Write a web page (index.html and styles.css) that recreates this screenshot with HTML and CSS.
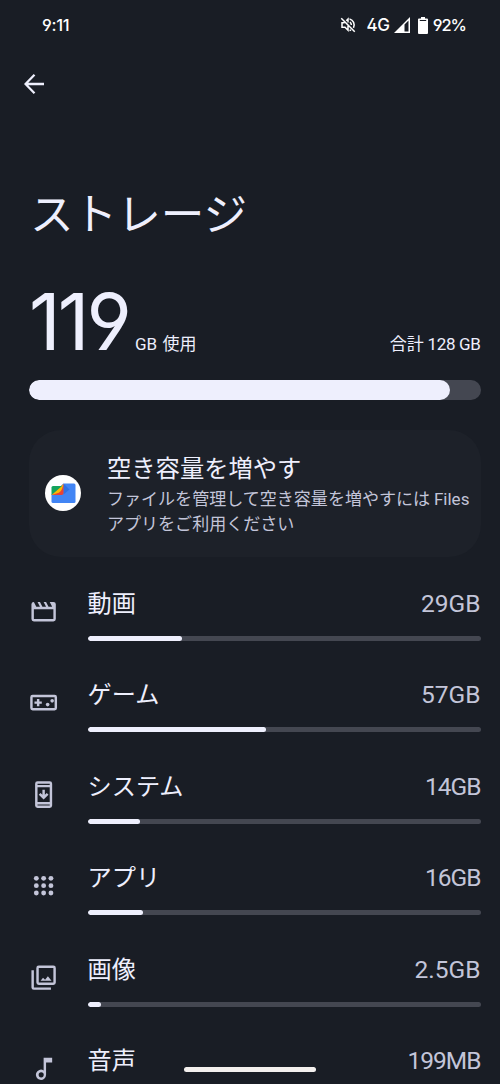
FILE: index.html
```html
<!DOCTYPE html>
<html lang="ja">
<head>
<meta charset="utf-8">
<meta name="viewport" content="width=device-width">
<title>ストレージ</title>
<link rel="stylesheet" href="styles.css">
</head>
<body>
<div class="screen">
  <header class="status">
    <span class="clock">9:11</span>
    <div class="status-icons">
      <svg class="mute" viewBox="0 0 24 24" fill="none" stroke="currentColor" stroke-width="2"><path d="M3 3l18 18M7.500 9H4v6h4l4 4v-6M9.700 6.300L12 4v4.800M14.500 8.200c1.400.9 2 2.200 2 3.800M14 3.800a8.500 8.500 0 0 1 5.300 12M16 18.500a9 9 0 0 1-2 1"/></svg>
      <span class="net">4G</span>
      <svg class="signal" viewBox="0 0 16 16" fill="currentColor"><path fill-rule="evenodd" d="M0 16L16 0v16zM10.500 7.500V14.500h4V3.500z"/></svg>
      <svg class="battery" viewBox="0 0 10 17" fill="currentColor"><path fill-rule="evenodd" d="M3 0h4v1.500h2q1 0 1 1V16q0 1-1 1H1q-1 0-1-1V2.500q0-1 1-1h2zM1.800 3v1h6.400V3z"/></svg>
      <span class="pct">92%</span>
    </div>
  </header>
  <nav class="toolbar">
    <svg class="back" viewBox="0 0 20 20" fill="none" stroke="currentColor" stroke-width="2.300"><path d="M10.500 .8L1.500 10l9 9.200M1.500 10H20"/></svg>
  </nav>
  <h1 class="title">ストレージ</h1>
  <section class="usage">
    <div class="usage-line">
      <span class="used">119</span>
      <span class="used-unit"><span class="latin">GB</span> 使用</span>
      <span class="total">合計 <span class="latin">128 GB</span></span>
    </div>
    <div class="meter"><div class="meter-fill" style="width:93.2%"></div></div>
  </section>
  <section class="card">
    <svg class="files" viewBox="0 0 36 36"><circle cx="18" cy="18" r="18" fill="#fff"/><path fill="#4285f4" d="M18.500 8.500H29q1.500 0 1.500 1.500v16.500q0 1.500-1.500 1.500H8q-1.500 0-1.500-1.500v-7z"/><path fill="#3072e5" d="M18.500 8.500l6 6-6 5z"/><path fill="#ea4335" d="M18.500 9v9q0 2-2 2h-10z"/><path fill="#fbbc04" d="M18.500 9L17 14q-1.200 3-3.200 3.700L6.500 20z"/><path fill="#14a35c" d="M8 11h9L6.500 20v-7.500Q6.500 11 8 11z"/></svg>
    <div class="card-copy">
      <h2 class="card-title">空き容量を増やす</h2>
      <p class="card-text">ファイルを管理して空き容量を増やすには <span class="files-word">Files</span><br>アプリをご利用ください</p>
    </div>
  </section>
  <main class="list">
    <div class="row">
      <svg class="icon" viewBox="0 0 24 24" fill="currentColor"><path d="M4 4l2 4h3L7 4h2l2 4h3l-2-4h2l2 4h3l-2-4h3q2 0 2 2v12q0 2-2 2H4q-2 0-2-2V6q0-2 2-2zm0 6v8h16v-8z" fill-rule="evenodd"/></svg>
      <div class="body"><div class="line"><span>動画</span><span class="size">29GB</span></div><div class="bar"><div class="fill" style="width:24%"></div></div></div>
    </div>
    <div class="row">
      <svg class="icon" viewBox="0 0 24 24" fill="currentColor"><path fill-rule="evenodd" d="M3 5.500h18q2 0 2 2v9q0 2-2 2H3q-2 0-2-2v-9q0-2 2-2zm0 2v9h18v-9zM6.500 9h2v2h2v2h-2v2h-2v-2h-2v-2h2z"/><circle cx="15.300" cy="13.600" r="1.500"/><circle cx="19" cy="10.500" r="1.500"/></svg>
      <div class="body"><div class="line"><span>ゲーム</span><span class="size">57GB</span></div><div class="bar"><div class="fill" style="width:45.500%"></div></div></div>
    </div>
    <div class="row">
      <svg class="icon" viewBox="0 0 24 24" fill="currentColor"><path fill-rule="evenodd" d="M7 1h10q2 0 2 2v18q0 2-2 2H7q-2 0-2-2V3q0-2 2-2zm0 2v1h10V3zm0 3v12h10V6zm0 14v1h10v-1zM11 8h2v4.200l1.600-1.600L16 12l-4 4-4-4 1.400-1.400 1.600 1.600z"/></svg>
      <div class="body"><div class="line"><span>システム</span><span class="size tight">14GB</span></div><div class="bar"><div class="fill" style="width:13.300%"></div></div></div>
    </div>
    <div class="row">
      <svg class="icon" viewBox="0 0 24 24" fill="currentColor"><circle cx="6" cy="6" r="2"/><circle cx="12" cy="6" r="2"/><circle cx="18" cy="6" r="2"/><circle cx="6" cy="12" r="2"/><circle cx="12" cy="12" r="2"/><circle cx="18" cy="12" r="2"/><circle cx="6" cy="18" r="2"/><circle cx="12" cy="18" r="2"/><circle cx="18" cy="18" r="2"/></svg>
      <div class="body"><div class="line"><span>アプリ</span><span class="size tight">16GB</span></div><div class="bar"><div class="fill" style="width:14.200%"></div></div></div>
    </div>
    <div class="row">
      <svg class="icon" viewBox="0 0 24 24" fill="currentColor"><path fill-rule="evenodd" d="M8 2h12q2 0 2 2v12q0 2-2 2H8q-2 0-2-2V4q0-2 2-2zm0 2v12h12V4zM9.500 14.500l2-2.500 1.700 1.800 2.300-3 3 3.700zM2 6h2v14h14v2H4q-2 0-2-2z"/></svg>
      <div class="body"><div class="line"><span>画像</span><span class="size">2.5GB</span></div><div class="bar"><div class="fill" style="width:3.500%"></div></div></div>
    </div>
    <div class="row">
      <svg class="icon" viewBox="0 0 24 24" fill="currentColor"><path fill-rule="evenodd" d="M12 3h7v4h-5v10a4.200 4.200 0 1 1-2-3.550zM10 15a2.100 2.100 0 1 0 0 4.200 2.100 2.100 0 1 0 0-4.200z"/></svg>
      <div class="body"><div class="line"><span>音声</span><span class="size tight">199MB</span></div></div>
    </div>
  </main>
  <div class="home-pill"></div>
</div>
</body>
</html>
```
FILE: styles.css
```css
* { box-sizing: border-box; margin: 0; padding: 0; }
body { background: #191d25; color: #eeeffd; font-family: Inter, "Noto Sans CJK JP", sans-serif; font-feature-settings: "ss01", "cv04"; }
svg { display: block; flex: none; }
h1, h2 { font-weight: 400; }
.screen { position: relative; width: 500px; height: 1084px; overflow: hidden; display: flex; flex-direction: column; }
.screen > * { flex-shrink: 0; }
.status { height: 50px; padding: 0 34px 0 42px; display: flex; align-items: center; justify-content: space-between; font-size: 17px; line-height: 24px; font-weight: 500; color: #fff; }
.clock { font-size: 16.500px; letter-spacing: -.3px; }
.status-icons { display: flex; align-items: center; }
.mute { width: 18px; height: 18px; margin-right: 10px; }
.net { letter-spacing: -.4px; margin-right: 4px; }
.signal { width: 16px; height: 16px; margin-right: 8px; }
.battery { width: 10px; height: 17px; margin-right: 5px; }
.pct { font-size: 16.500px; letter-spacing: -1px; }
.toolbar { height: 70px; padding: 24px 24px; }
.back { width: 20px; height: 20px; }
.title { height: 60px; margin-top: 61px; padding-left: 30px; font: 400 43.600px/60px "Noto Sans CJK JP", sans-serif; }
.usage { padding: 42px 19.500px 0 29px; }
.usage-line { height: 78px; display: flex; align-items: baseline; font-size: 17px; line-height: 78px; }
.used { font-size: 78px; font-weight: 400; letter-spacing: -3px; width: 106px; white-space: nowrap; }
.used-unit, .total { font-family: "Noto Sans CJK JP", sans-serif; }
.used-unit { word-spacing: 1.500px; }
.latin { font-family: Roboto, sans-serif; }
.total { margin-left: auto; }
.total .latin { letter-spacing: -.35px; }
.meter { height: 20px; margin-top: 19px; border-radius: 10px; background: #444751; overflow: hidden; }
.meter-fill { height: 20px; border-radius: 10px; background: #eeeffd; }
.card { height: 127px; margin: 30px 19.500px 0 29px; padding: 0 0 2px 16px; border-radius: 32px; background: #1d2129; display: flex; align-items: center; }
.files { width: 36px; height: 36px; }
.card-copy { padding-left: 26px; white-space: nowrap; }
.card-title { margin-bottom: 2px; font: 400 24.300px/34px "Noto Sans CJK JP", sans-serif; }
.card-text { font: 400 17.050px/24.500px "Noto Sans CJK JP", sans-serif; color: #c3c5d9; }
.files-word { font-family: Roboto, sans-serif; }
.list { padding: 29px 19.500px 0 29px; }
.row { height: 91.400px; display: flex; }
.icon { width: 29.250px; height: 29.250px; margin-top: 11px; color: #c3c5d9; }
.body { flex: 1; margin-left: 29.250px; }
.line { display: flex; justify-content: space-between; height: 34px; font: 400 24.200px/32.500px "Noto Sans CJK JP", sans-serif; }
.size { font-family: Roboto, sans-serif; font-size: 24.500px; line-height: 36px; color: #c3c5d9; }
.tight { letter-spacing: -1px; }
.bar { height: 5px; margin-top: 16px; border-radius: 3px; background: #444751; overflow: hidden; }
.fill { height: 5px; border-radius: 3px; background: #eeeffd; }
.home-pill { position: absolute; left: 184px; top: 1067px; width: 132px; height: 5px; border-radius: 3px; background: #f3f0ee; }
```
